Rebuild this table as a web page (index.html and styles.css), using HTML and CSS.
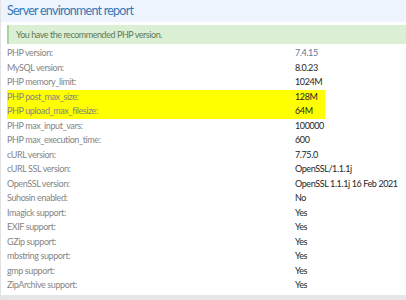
FILE: index.html
```html
<!DOCTYPE html>
<html lang="en">
<head>
    <meta charset="UTF-8">
    <title>Server environment report</title>
    <link rel="stylesheet" href="styles.css">
</head>
<body>
    <div class="report">
        <h2 class="report-title">Server environment report</h2>
        <div class="notice">You have the recommended PHP version.</div>
        <div class="rows">
            <div class="row"><span class="label">PHP version:</span><span class="value link">7.4.15</span></div>
            <div class="row"><span class="label">MySQL version:</span><span class="value">8.0.23</span></div>
            <div class="row"><span class="label">PHP memory_limit:</span><span class="value">1024M</span></div>
            <div class="row hl"><span class="label">PHP post_max_size:</span><span class="value">128M</span></div>
            <div class="row hl"><span class="label">PHP upload_max_filesize:</span><span class="value">64M</span></div>
            <div class="row"><span class="label">PHP max_input_vars:</span><span class="value">100000</span></div>
            <div class="row"><span class="label">PHP max_execution_time:</span><span class="value">600</span></div>
            <div class="row"><span class="label">cURL version:</span><span class="value">7.75.0</span></div>
            <div class="row"><span class="label">cURL SSL version:</span><span class="value">OpenSSL/1.1.1j</span></div>
            <div class="row"><span class="label">OpenSSL version:</span><span class="value">OpenSSL 1.1.1j 16 Feb 2021</span></div>
            <div class="row"><span class="label">Suhosin enabled:</span><span class="value">No</span></div>
            <div class="row"><span class="label">Imagick support:</span><span class="value">Yes</span></div>
            <div class="row"><span class="label">EXIF support:</span><span class="value">Yes</span></div>
            <div class="row"><span class="label">GZip support:</span><span class="value">Yes</span></div>
            <div class="row"><span class="label">mbstring support:</span><span class="value">Yes</span></div>
            <div class="row"><span class="label">gmp support:</span><span class="value">Yes</span></div>
            <div class="row"><span class="label">ZipArchive support:</span><span class="value">Yes</span></div>
        </div>
        <div class="footer-bar"></div>
    </div>
</body>
</html>
```

FILE: styles.css
```css
body {
    margin: 0;
    background-color: #ffffff;
    font-family: Lato, "Noto Sans", sans-serif;
}
.report {
    border-left: 1px solid #e2e2e2;
    height: 300px;
    display: flex;
    flex-direction: column;
    overflow: hidden;
}
.report-title {
    margin: 0;
    height: 22px;
    padding: 0 6px;
    background-color: #edf4fd;
    color: #3478b4;
    font-size: 12.5px;
    font-weight: normal;
    letter-spacing: -0.75px;
    line-height: 22px;
}
.notice {
    margin: 3px 0 0 6px;
    height: 19px;
    padding-left: 7px;
    border-left: 2px solid #a9d39f;
    background-color: #dbefd5;
    color: #5d7a57;
    font-size: 9px;
    letter-spacing: -0.45px;
    line-height: 19px;
}
.rows {
    margin: 2px 0 0 6px;
    flex: 1;
}
.row {
    display: grid;
    grid-template-columns: 288px 1fr;
    height: 14.5px;
    line-height: 14.5px;
    font-size: 9px;
    letter-spacing: -0.4px;
    white-space: nowrap;
}
.row.hl {
    background-color: #ffff00;
    margin-right: 81px;
}
.label {
    color: #858585;
}
.value {
    color: #262626;
}
.value.link {
    color: #5579a0;
}
.footer-bar {
    height: 5px;
    background-color: #e6e6e6;
}
```
